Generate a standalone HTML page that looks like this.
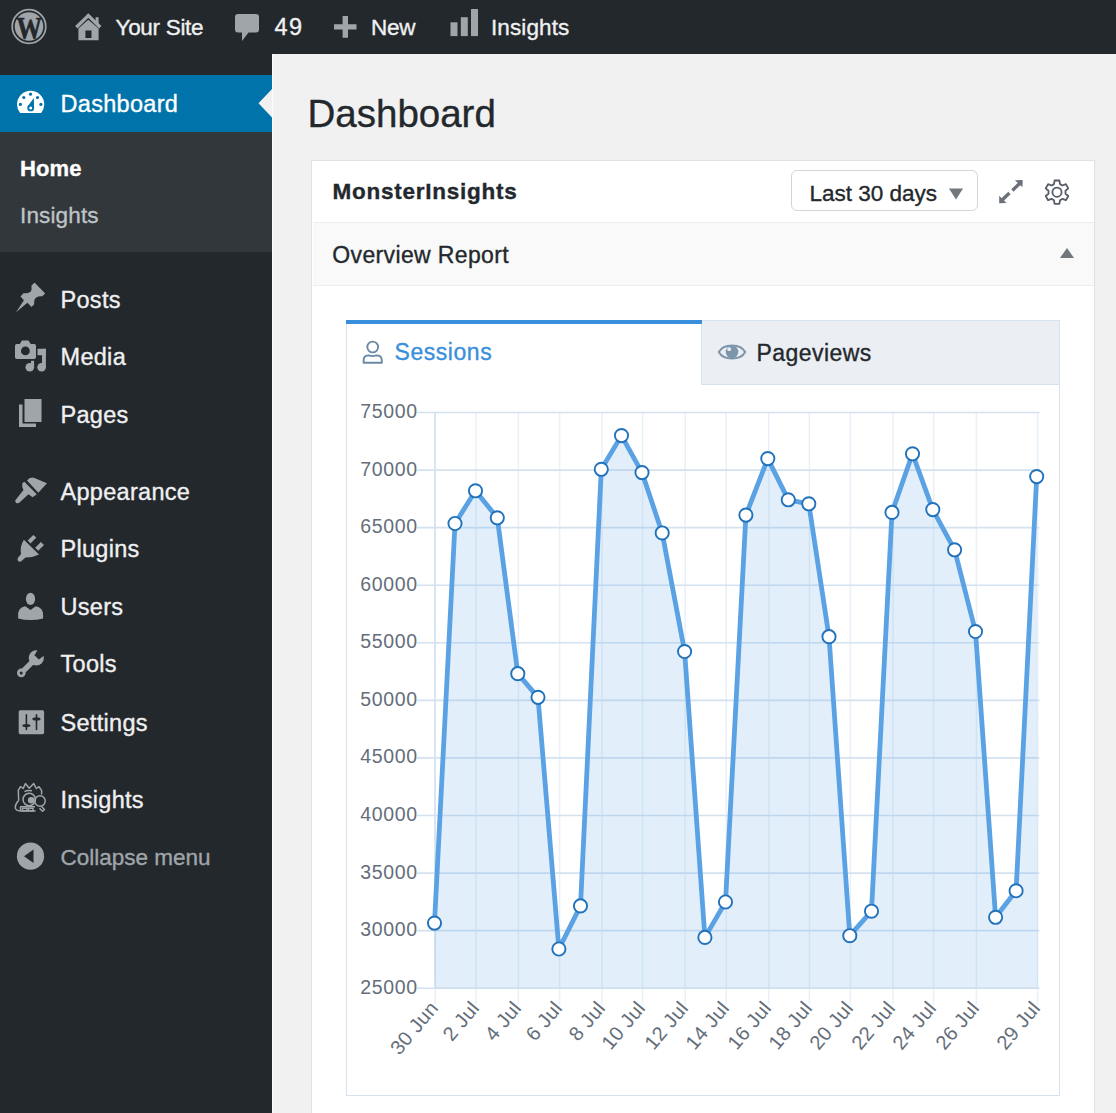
<!DOCTYPE html>
<html><head><meta charset="utf-8">
<style>
*{margin:0;padding:0;box-sizing:border-box}
html,body{width:1116px;height:1113px;overflow:hidden;background:#f1f1f1;font-family:"Liberation Sans",sans-serif}
.a{position:absolute;white-space:nowrap;line-height:1;-webkit-text-stroke:0.35px currentColor}
#bar{position:absolute;left:0;top:0;width:1116px;height:54px;background:#23282d}
#side{position:absolute;left:0;top:54px;width:272px;height:1059px;background:#23282d}
#blue{position:absolute;left:0;top:75px;width:272px;height:57px;background:#0073aa}
#sub{position:absolute;left:0;top:132px;width:272px;height:120px;background:#32373c}
.tb{font-size:22.5px;color:#f0f0f1;top:16.5px;letter-spacing:-0.3px}
.mi{font-size:23.5px;color:#f0f0f1;left:60.5px;letter-spacing:0.3px}
.ic{position:absolute}
.yl{position:absolute;left:300px;width:117.6px;text-align:right;font-size:19.5px;line-height:1;color:#646e7a;letter-spacing:0.6px}
.xl{position:absolute;width:200px;text-align:right;font-size:20px;line-height:20px;color:#646e7a;transform-origin:100% 50%;transform:rotate(-50deg);letter-spacing:0.35px}
</style></head><body>
<div id="bar"></div>
<div id="side"></div>
<div id="blue"></div>
<div id="sub"></div>
<div style="position:absolute;left:272px;top:54px;width:1px;height:1059px;background:#fcfcfc"></div>
<!-- blue arrow notch -->
<svg class="ic" style="left:258px;top:89px" width="14" height="29"><path d="M14,0 L0.5,14.3 L14,28.6 Z" fill="#f1f1f1"/></svg>

<!-- admin bar icons -->
<svg class="ic" style="left:11px;top:8px" width="36" height="37" viewBox="0 0 36 37">
 <circle cx="18" cy="18.5" r="16.8" fill="none" stroke="#a0a5aa" stroke-width="1.7"/>
 <circle cx="18" cy="18.5" r="14.3" fill="#a0a5aa"/>
 <text x="18.2" y="30.9" text-anchor="middle" font-family="Liberation Serif" font-weight="bold" font-size="32" fill="#23282d" textLength="25.8" lengthAdjust="spacingAndGlyphs" stroke="#23282d" stroke-width="0.6">W</text>
</svg>
<svg class="ic" style="left:75px;top:13px" width="28" height="29" viewBox="0 0 28 29">
 <path d="M1.3,14.2 L13.3,2.5 L25.3,14.2" fill="none" stroke="#a0a5aa" stroke-width="3.3"/>
 <rect x="20.6" y="4.2" width="3" height="6.8" fill="#a0a5aa"/>
 <path d="M3.4,15.6 L13.3,6.8 L23.6,15.6 V27.3 H3.4 Z M10.4,17.4 V24.9 H16.5 V17.4 Z" fill="#a0a5aa" fill-rule="evenodd"/>
</svg>
<svg class="ic" style="left:234px;top:13px" width="26" height="30" viewBox="0 0 26 30">
 <path d="M4,1 H22 Q25,1 25,4 V16.5 Q25,19.5 22,19.5 H14.5 L8,28 V19.5 H4 Q1,19.5 1,16.5 V4 Q1,1 4,1 Z" fill="#a0a5aa"/>
</svg>
<svg class="ic" style="left:333px;top:15px" width="25" height="24" viewBox="0 0 25 24">
 <path d="M9.6,1 H15 V9.2 H23.5 V14.6 H15 V22.8 H9.6 V14.6 H1 V9.2 H9.6 Z" fill="#a0a5aa"/>
</svg>
<svg class="ic" style="left:449px;top:8px" width="31" height="30" viewBox="0 0 31 30">
 <rect x="1.5" y="14.3" width="7" height="13.8" fill="#a0a5aa"/>
 <rect x="11.8" y="9.2" width="7" height="18.9" fill="#a0a5aa"/>
 <rect x="22" y="1" width="7" height="27.1" fill="#a0a5aa"/>
</svg>
<div class="a tb" style="left:115.5px">Your Site</div>
<div class="a tb" style="left:274.5px;letter-spacing:1.4px;font-size:23.5px;top:16.2px">49</div>
<div class="a tb" style="left:371px">New</div>
<div class="a tb" style="left:491px;letter-spacing:0.1px">Insights</div>

<!-- sidebar icons -->
<svg class="ic" style="left:16px;top:90px" width="30" height="24" viewBox="0 0 30 24">
 <path d="M4.1,22.96 A13.6,13.6 0 1 1 25.15,22.96 Z" fill="#fff"/>
 <circle cx="14.5" cy="4.2" r="1.6" fill="#0073aa"/>
 <circle cx="7.8" cy="7.5" r="1.6" fill="#0073aa"/>
 <circle cx="21.5" cy="7.5" r="1.6" fill="#0073aa"/>
 <circle cx="4.4" cy="14.4" r="1.6" fill="#0073aa"/>
 <circle cx="24.9" cy="14.4" r="1.6" fill="#0073aa"/>
 <path d="M17.8,8 L11.8,16.2 L18.1,18.3 Z" fill="#0073aa"/>
 <circle cx="14.7" cy="17.9" r="3.4" fill="#0073aa"/>
 <circle cx="14.7" cy="17.9" r="1.5" fill="#fff"/>
</svg>
<svg class="ic" style="left:15px;top:282px" width="32" height="31" viewBox="0 0 32 31">
 <path d="M19.5,0.6 L30.2,11.4 L27.2,14.2 Q19.8,13.8 19.2,19.2 L19.2,22.2 L16.5,25 L12.4,20.8 L1,30.2 L8.9,18.2 L5.5,14.5 L8.5,11.2 Q16.6,12 16.6,6.6 L16.4,3.7 Z" fill="#a0a5aa"/>
</svg>
<svg class="ic" style="left:14px;top:339px" width="34" height="34" viewBox="0 0 34 34">
 <path fill-rule="evenodd" d="M2.8,4.9 H5.8 L8,1.5 H14.4 L16.8,4.9 H20.2 Q22,4.9 22,6.7 V18.3 Q22,20.1 20.2,20.1 H2.8 Q1,20.1 1,18.3 V6.7 Q1,4.9 2.8,4.9 Z M11.4,7.5 A4.4,4.4 0 1 0 11.4,16.3 A4.4,4.4 0 1 0 11.4,7.5 Z" fill="#a0a5aa"/>
 <rect x="23.5" y="9.8" width="8.4" height="6.4" fill="#a0a5aa"/>
 <rect x="28" y="9.8" width="3.9" height="18.4" fill="#a0a5aa"/>
 <circle cx="27.6" cy="28.2" r="4.3" fill="#a0a5aa"/>
 <rect x="17" y="21.8" width="3.1" height="6.4" fill="#a0a5aa"/>
 <circle cx="15.8" cy="28.2" r="4.3" fill="#a0a5aa"/>
</svg>
<svg class="ic" style="left:18px;top:398px" width="25" height="30" viewBox="0 0 25 30">
 <path d="M1,6.5 H4.5 V25.5 H18 V29 H1 Z" fill="#a0a5aa"/>
 <rect x="6.5" y="1" width="17" height="23" fill="#a0a5aa"/>
</svg>
<svg class="ic" style="left:14px;top:476px" width="34" height="29" viewBox="0 0 34 29">
 <path d="M13,4.4 Q16,0.6 20.5,2 Q26,4.3 33,7.3 L24.3,16.8 Z" fill="#a0a5aa"/>
 <path d="M8.3,7.3 L10.4,5.8 L22.8,18.3 L18.6,21.3 L14.5,18.2 L5.2,26.8 Q2.5,28.3 1.3,25.8 Q1,24.3 2.3,23 L9.5,14 Q7.6,11.5 8.3,7.3 Z" fill="#a0a5aa"/>
</svg>
<svg class="ic" style="left:16px;top:533px" width="30" height="30" viewBox="0 0 30 30">
 <path d="M7.9,6.8 L23,21.5 Q16.5,24.8 9.5,24.6 L5.6,28 Q3.6,29.5 2,27.8 Q0.6,26 2.5,24 L5,21.3 Q3.6,13.5 7.9,6.8 Z" fill="#a0a5aa"/>
 <path d="M11.7,7.5 L17.3,1.9 L20.3,4.5 L14.5,10.5 Z" fill="#a0a5aa"/>
 <path d="M19.2,14.7 L24.9,9 L28,11.9 L22.2,17.7 Z" fill="#a0a5aa"/>
</svg>
<svg class="ic" style="left:17px;top:592px" width="28" height="30" viewBox="0 0 28 30">
 <ellipse cx="13.5" cy="6.9" rx="4.6" ry="6.1" fill="#a0a5aa"/>
 <path d="M1.1,26.6 V23 Q1.1,15.6 8.3,14.3 L13.5,17.9 L18.7,14.3 Q26.1,15.6 26.1,23 V26.6 Q13.5,29.6 1.1,26.6 Z" fill="#a0a5aa"/>
</svg>
<svg class="ic" style="left:15px;top:649px" width="30" height="30" viewBox="0 0 30 30">
 <circle cx="21.3" cy="8.9" r="7.6" fill="#a0a5aa"/>
 <path d="M20.5,9.8 L6.3,23.9" stroke="#a0a5aa" stroke-width="5.4" stroke-linecap="round"/>
 <circle cx="6.3" cy="23.9" r="4.3" fill="#a0a5aa"/>
 <path d="M24.6,-2 L19.4,6.2 L23.9,10.4 L32,4.2 Z" fill="#23282d"/>
 <circle cx="6.2" cy="24" r="1.5" fill="#23282d"/>
</svg>
<svg class="ic" style="left:18px;top:709px" width="27" height="27" viewBox="0 0 27 27">
 <rect x="0.7" y="1.2" width="25.4" height="24" rx="1.6" fill="#a0a5aa"/>
 <rect x="7.6" y="5" width="1.6" height="16.2" rx="0.8" fill="#23282d"/>
 <ellipse cx="8.4" cy="16.6" rx="4.1" ry="1.6" fill="#23282d"/>
 <rect x="17.7" y="5" width="1.6" height="16.2" rx="0.8" fill="#23282d"/>
 <ellipse cx="18.5" cy="9.9" rx="4.1" ry="1.6" fill="#23282d"/>
</svg>
<svg class="ic" style="left:14px;top:782px" width="34" height="31" viewBox="0 0 34 31">
 <g fill="none" stroke="#a0a5aa" stroke-width="1.5" stroke-linejoin="round">
 <path d="M4.7,18.6 L4.3,8.4 L6.5,4.7 L9.2,6.5 L11.4,1.6 L15.2,6.2 L19.7,1.6 L22.3,6.5 L25,4.7 L27.6,8.4 L27.6,12.6"/>
 <path d="M4.7,18.6 Q0.5,23 1.5,26.5 Q2.5,29 7.3,29.1 H21.5"/>
 <path d="M6.5,29.3 V24.8 H21"/>
 <rect x="8.5" y="26.2" width="4.5" height="2.6"/>
 <rect x="14.5" y="26.2" width="4.5" height="2.6"/>
 <path d="M10.5,9.7 Q13,8 18,8.8"/>
 <circle cx="15.2" cy="17.5" r="6.2"/>
 <circle cx="26" cy="19" r="5.2"/>
 <path d="M27.5,24.5 L30.5,27.5 L28.5,29.3 L25.5,26.2"/>
 </g>
 <circle cx="17.2" cy="18.2" r="3.3" fill="#a0a5aa"/>
</svg>
<svg class="ic" style="left:16px;top:842px" width="29" height="29" viewBox="0 0 29 29">
 <circle cx="14.5" cy="14.2" r="13.6" fill="#a0a5aa"/>
 <path d="M8,14.2 L17.5,7.5 V21 Z" fill="#23282d"/>
</svg>

<div class="a mi" style="top:93.0px;color:#fff">Dashboard</div>
<div class="a" style="left:20px;top:157.5px;font-size:22px;font-weight:bold;color:#fff;letter-spacing:0.1px">Home</div>
<div class="a" style="left:20px;top:205px;font-size:22.5px;color:#bfc3c7;letter-spacing:0.15px">Insights</div>
<div class="a mi" style="top:288.7px">Posts</div>
<div class="a mi" style="top:345.9px">Media</div>
<div class="a mi" style="top:404.1px">Pages</div>
<div class="a mi" style="top:481.0px">Appearance</div>
<div class="a mi" style="top:537.8px">Plugins</div>
<div class="a mi" style="top:596.0px">Users</div>
<div class="a mi" style="top:653.4px">Tools</div>
<div class="a mi" style="top:712.3px">Settings</div>
<div class="a mi" style="top:788.7px">Insights</div>
<div class="a mi" style="top:847.2px;color:#a0a5aa;font-size:22.5px;letter-spacing:0">Collapse menu</div>

<!-- main -->
<div class="a" style="left:307.5px;top:94.6px;font-size:38.5px;color:#23282d">Dashboard</div>
<div style="position:absolute;left:311px;top:159.5px;width:784px;height:960px;background:#fff;border:1.6px solid #e1e1e1"></div>
<div style="position:absolute;left:312.5px;top:222px;width:781px;height:64px;background:#f9f9f9;border-top:1.5px solid #eee;border-bottom:1.5px solid #eee"></div>
<div class="a" style="left:332.5px;top:180.7px;font-size:22.5px;font-weight:bold;color:#23282d;letter-spacing:0.75px">MonsterInsights</div>
<div class="a" style="left:332.3px;top:243.9px;font-size:23px;color:#23282d;letter-spacing:0.36px">Overview Report</div>
<svg class="ic" style="left:1059px;top:247px" width="16" height="12"><path d="M1,11 L8,1 L15,11 Z" fill="#72777c"/></svg>
<div style="position:absolute;left:791px;top:169.8px;width:187px;height:41.5px;border:1.5px solid #d5d5d5;border-radius:6px;background:#fff"></div>
<div class="a" style="left:809.5px;top:183px;font-size:22.5px;color:#23282d">Last 30 days</div>
<svg class="ic" style="left:948px;top:187px" width="16" height="14"><path d="M1,1.5 H15 L8,12.5 Z" fill="#72777c"/></svg>
<svg class="ic" style="left:996px;top:177px" width="30" height="30" viewBox="0 0 30 30">
 <path d="M26.7,3 L18.9,3.3 L26.4,10.2 Z" fill="#6a7077"/>
 <path d="M23.6,6.5 L16.4,13.5" stroke="#6a7077" stroke-width="3.3"/>
 <path d="M3.2,26.2 L3.2,18.8 L10.5,25.9 Z" fill="#6a7077"/>
 <path d="M6.2,23 L13.4,16" stroke="#6a7077" stroke-width="3.3"/>
</svg>
<svg class="ic" style="left:1042px;top:178px" width="30" height="30" viewBox="0 0 30 30">
 <path fill="none" stroke="#555d66" stroke-width="1.8" stroke-linejoin="round" d="M12.6,2.5 H17.4 L18,6.1 L20.5,7.5 L23.9,6.2 L26.3,10.4 L23.5,12.7 V15.7 L26.3,18 L23.9,22.2 L20.5,20.9 L18,22.3 L17.4,25.9 H12.6 L12,22.3 L9.5,20.9 L6.1,22.2 L3.7,18 L6.5,15.7 V12.7 L3.7,10.4 L6.1,6.2 L9.5,7.5 L12,6.1 Z"/>
 <circle cx="15" cy="14.2" r="4.6" fill="none" stroke="#555d66" stroke-width="1.8"/>
</svg>

<!-- chart container -->
<div style="position:absolute;left:346px;top:320px;width:713.5px;height:775.5px;border:1.5px solid #d6e2ed;background:#fff"></div>
<div style="position:absolute;left:701px;top:320px;width:358.5px;height:64.5px;border:1.5px solid #d6e2ed;background:#ebeef2"></div>
<div style="position:absolute;left:346px;top:320px;width:356px;height:4px;background:#3a8fdc"></div>
<svg class="ic" style="left:361px;top:340px" width="23" height="25" viewBox="0 0 23 25">
 <circle cx="11.7" cy="7" r="5.4" fill="none" stroke="#6b8aa6" stroke-width="1.9"/>
 <path d="M2.6,22.8 V20.3 Q2.6,15.4 7.8,15.4 Q11.5,16.8 15.4,15.4 Q20.8,15.4 20.8,20.3 V22.8 Z" fill="none" stroke="#6b8aa6" stroke-width="1.9" stroke-linejoin="round"/>
</svg>
<div class="a" style="left:394.5px;top:340.5px;font-size:23px;color:#3a8fdc;letter-spacing:0.55px">Sessions</div>
<svg class="ic" style="left:717px;top:342px" width="30" height="20" viewBox="0 0 30 20">
 <path d="M1.8,10 C6.5,1.3 23.5,1.3 28.2,10 C23.5,18.7 6.5,18.7 1.8,10 Z" fill="none" stroke="#7b95aa" stroke-width="2"/>
 <circle cx="15" cy="10" r="6.3" fill="#7b95aa"/>
 <circle cx="12.2" cy="7.2" r="1.9" fill="#ebeef2"/>
</svg>
<div class="a" style="left:756.5px;top:341.6px;font-size:23px;color:#23282d;letter-spacing:0.45px">Pageviews</div>

<svg width="1116" height="1113" style="position:absolute;left:0;top:0"><line x1="435.2" y1="412.5" x2="435.2" y2="1004" stroke="#e9f0f7" stroke-width="1.5"/><line x1="476.0" y1="412.5" x2="476.0" y2="1004" stroke="#e9f0f7" stroke-width="1.5"/><line x1="518.4" y1="412.5" x2="518.4" y2="1004" stroke="#e9f0f7" stroke-width="1.5"/><line x1="559.6" y1="412.5" x2="559.6" y2="1004" stroke="#e9f0f7" stroke-width="1.5"/><line x1="602.0" y1="412.5" x2="602.0" y2="1004" stroke="#e9f0f7" stroke-width="1.5"/><line x1="642.6" y1="412.5" x2="642.6" y2="1004" stroke="#e9f0f7" stroke-width="1.5"/><line x1="685.2" y1="412.5" x2="685.2" y2="1004" stroke="#e9f0f7" stroke-width="1.5"/><line x1="726.2" y1="412.5" x2="726.2" y2="1004" stroke="#e9f0f7" stroke-width="1.5"/><line x1="768.8" y1="412.5" x2="768.8" y2="1004" stroke="#e9f0f7" stroke-width="1.5"/><line x1="809.4" y1="412.5" x2="809.4" y2="1004" stroke="#e9f0f7" stroke-width="1.5"/><line x1="850.4" y1="412.5" x2="850.4" y2="1004" stroke="#e9f0f7" stroke-width="1.5"/><line x1="893.0" y1="412.5" x2="893.0" y2="1004" stroke="#e9f0f7" stroke-width="1.5"/><line x1="933.6" y1="412.5" x2="933.6" y2="1004" stroke="#e9f0f7" stroke-width="1.5"/><line x1="976.4" y1="412.5" x2="976.4" y2="1004" stroke="#e9f0f7" stroke-width="1.5"/><line x1="1037.6" y1="412.5" x2="1037.6" y2="1004" stroke="#e9f0f7" stroke-width="1.5"/><line x1="417" y1="412.5" x2="1039.5" y2="412.5" stroke="#d4e2ef" stroke-width="1.6"/><line x1="417" y1="470.1" x2="1039.5" y2="470.1" stroke="#d4e2ef" stroke-width="1.6"/><line x1="417" y1="527.6" x2="1039.5" y2="527.6" stroke="#d4e2ef" stroke-width="1.6"/><line x1="417" y1="585.2" x2="1039.5" y2="585.2" stroke="#d4e2ef" stroke-width="1.6"/><line x1="417" y1="642.8" x2="1039.5" y2="642.8" stroke="#d4e2ef" stroke-width="1.6"/><line x1="417" y1="700.4" x2="1039.5" y2="700.4" stroke="#d4e2ef" stroke-width="1.6"/><line x1="417" y1="757.9" x2="1039.5" y2="757.9" stroke="#d4e2ef" stroke-width="1.6"/><line x1="417" y1="815.5" x2="1039.5" y2="815.5" stroke="#d4e2ef" stroke-width="1.6"/><line x1="417" y1="873.1" x2="1039.5" y2="873.1" stroke="#d4e2ef" stroke-width="1.6"/><line x1="417" y1="930.6" x2="1039.5" y2="930.6" stroke="#d4e2ef" stroke-width="1.6"/><line x1="417" y1="988.2" x2="1039.5" y2="988.2" stroke="#d4e2ef" stroke-width="1.6"/><line x1="435.0" y1="412.5" x2="435.0" y2="988.2" stroke="#d4e2ef" stroke-width="1.6"/><path d="M434.50,923.09 L455.00,523.52 L475.50,490.82 L497.30,517.82 L517.80,673.64 L538.00,697.34 L558.90,948.99 L580.50,905.89 L601.30,469.30 L621.50,435.61 L642.00,472.59 L662.20,532.94 L684.60,651.53 L704.90,937.39 L725.50,901.98 L745.90,515.11 L767.80,458.60 L788.30,499.81 L808.80,503.82 L829.00,636.63 L849.80,935.68 L871.50,911.18 L892.00,512.42 L912.50,453.80 L932.80,509.62 L954.60,549.82 L975.50,631.53 L995.60,917.29 L1016.10,890.78 L1036.70,476.61 L1038.00,988.20 L435.00,988.20 Z" fill="rgba(109,176,233,0.2)"/><path d="M434.50,923.09 L455.00,523.52 L475.50,490.82 L497.30,517.82 L517.80,673.64 L538.00,697.34 L558.90,948.99 L580.50,905.89 L601.30,469.30 L621.50,435.61 L642.00,472.59 L662.20,532.94 L684.60,651.53 L704.90,937.39 L725.50,901.98 L745.90,515.11 L767.80,458.60 L788.30,499.81 L808.80,503.82 L829.00,636.63 L849.80,935.68 L871.50,911.18 L892.00,512.42 L912.50,453.80 L932.80,509.62 L954.60,549.82 L975.50,631.53 L995.60,917.29 L1016.10,890.78 L1036.70,476.61" fill="none" stroke="#5aa2e3" stroke-width="4.8" stroke-linejoin="round"/><circle cx="434.50" cy="923.09" r="6.6" fill="#fff" stroke="#2172bb" stroke-width="1.9"/><circle cx="455.00" cy="523.52" r="6.6" fill="#fff" stroke="#2172bb" stroke-width="1.9"/><circle cx="475.50" cy="490.82" r="6.6" fill="#fff" stroke="#2172bb" stroke-width="1.9"/><circle cx="497.30" cy="517.82" r="6.6" fill="#fff" stroke="#2172bb" stroke-width="1.9"/><circle cx="517.80" cy="673.64" r="6.6" fill="#fff" stroke="#2172bb" stroke-width="1.9"/><circle cx="538.00" cy="697.34" r="6.6" fill="#fff" stroke="#2172bb" stroke-width="1.9"/><circle cx="558.90" cy="948.99" r="6.6" fill="#fff" stroke="#2172bb" stroke-width="1.9"/><circle cx="580.50" cy="905.89" r="6.6" fill="#fff" stroke="#2172bb" stroke-width="1.9"/><circle cx="601.30" cy="469.30" r="6.6" fill="#fff" stroke="#2172bb" stroke-width="1.9"/><circle cx="621.50" cy="435.61" r="6.6" fill="#fff" stroke="#2172bb" stroke-width="1.9"/><circle cx="642.00" cy="472.59" r="6.6" fill="#fff" stroke="#2172bb" stroke-width="1.9"/><circle cx="662.20" cy="532.94" r="6.6" fill="#fff" stroke="#2172bb" stroke-width="1.9"/><circle cx="684.60" cy="651.53" r="6.6" fill="#fff" stroke="#2172bb" stroke-width="1.9"/><circle cx="704.90" cy="937.39" r="6.6" fill="#fff" stroke="#2172bb" stroke-width="1.9"/><circle cx="725.50" cy="901.98" r="6.6" fill="#fff" stroke="#2172bb" stroke-width="1.9"/><circle cx="745.90" cy="515.11" r="6.6" fill="#fff" stroke="#2172bb" stroke-width="1.9"/><circle cx="767.80" cy="458.60" r="6.6" fill="#fff" stroke="#2172bb" stroke-width="1.9"/><circle cx="788.30" cy="499.81" r="6.6" fill="#fff" stroke="#2172bb" stroke-width="1.9"/><circle cx="808.80" cy="503.82" r="6.6" fill="#fff" stroke="#2172bb" stroke-width="1.9"/><circle cx="829.00" cy="636.63" r="6.6" fill="#fff" stroke="#2172bb" stroke-width="1.9"/><circle cx="849.80" cy="935.68" r="6.6" fill="#fff" stroke="#2172bb" stroke-width="1.9"/><circle cx="871.50" cy="911.18" r="6.6" fill="#fff" stroke="#2172bb" stroke-width="1.9"/><circle cx="892.00" cy="512.42" r="6.6" fill="#fff" stroke="#2172bb" stroke-width="1.9"/><circle cx="912.50" cy="453.80" r="6.6" fill="#fff" stroke="#2172bb" stroke-width="1.9"/><circle cx="932.80" cy="509.62" r="6.6" fill="#fff" stroke="#2172bb" stroke-width="1.9"/><circle cx="954.60" cy="549.82" r="6.6" fill="#fff" stroke="#2172bb" stroke-width="1.9"/><circle cx="975.50" cy="631.53" r="6.6" fill="#fff" stroke="#2172bb" stroke-width="1.9"/><circle cx="995.60" cy="917.29" r="6.6" fill="#fff" stroke="#2172bb" stroke-width="1.9"/><circle cx="1016.10" cy="890.78" r="6.6" fill="#fff" stroke="#2172bb" stroke-width="1.9"/><circle cx="1036.70" cy="476.61" r="6.6" fill="#fff" stroke="#2172bb" stroke-width="1.9"/></svg>
<div class="yl" style="top:402.0px">75000</div><div class="yl" style="top:459.6px">70000</div><div class="yl" style="top:517.1px">65000</div><div class="yl" style="top:574.7px">60000</div><div class="yl" style="top:632.3px">55000</div><div class="yl" style="top:689.9px">50000</div><div class="yl" style="top:747.4px">45000</div><div class="yl" style="top:805.0px">40000</div><div class="yl" style="top:862.6px">35000</div><div class="yl" style="top:920.1px">30000</div><div class="yl" style="top:977.7px">25000</div>
<div class="xl" style="left:233.7px;top:993.5px">30 Jun</div><div class="xl" style="left:274.7px;top:993.5px">2 Jul</div><div class="xl" style="left:317.0px;top:993.5px">4 Jul</div><div class="xl" style="left:358.1px;top:993.5px">6 Jul</div><div class="xl" style="left:400.5px;top:993.5px">8 Jul</div><div class="xl" style="left:441.2px;top:993.5px">10 Jul</div><div class="xl" style="left:483.8px;top:993.5px">12 Jul</div><div class="xl" style="left:524.7px;top:993.5px">14 Jul</div><div class="xl" style="left:567.0px;top:993.5px">16 Jul</div><div class="xl" style="left:608.0px;top:993.5px">18 Jul</div><div class="xl" style="left:649.0px;top:993.5px">20 Jul</div><div class="xl" style="left:691.2px;top:993.5px">22 Jul</div><div class="xl" style="left:732.0px;top:993.5px">24 Jul</div><div class="xl" style="left:774.7px;top:993.5px">26 Jul</div><div class="xl" style="left:835.9px;top:993.5px">29 Jul</div>
</body></html>
